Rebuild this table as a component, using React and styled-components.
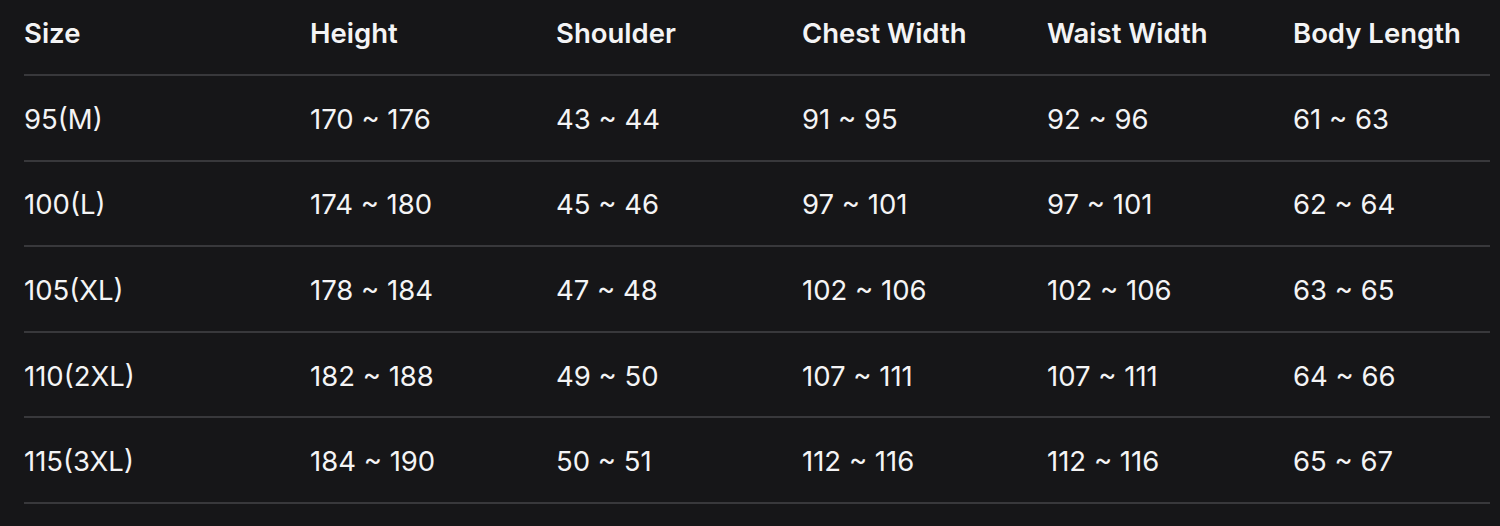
import React from 'react';
import styled, { createGlobalStyle } from 'styled-components';

const headers = ['Size', 'Height', 'Shoulder', 'Chest Width', 'Waist Width', 'Body Length'];

const rows = [
  ['95(M)', '170 ~ 176', '43 ~ 44', '91 ~ 95', '92 ~ 96', '61 ~ 63'],
  ['100(L)', '174 ~ 180', '45 ~ 46', '97 ~ 101', '97 ~ 101', '62 ~ 64'],
  ['105(XL)', '178 ~ 184', '47 ~ 48', '102 ~ 106', '102 ~ 106', '63 ~ 65'],
  ['110(2XL)', '182 ~ 188', '49 ~ 50', '107 ~ 111', '107 ~ 111', '64 ~ 66'],
  ['115(3XL)', '184 ~ 190', '50 ~ 51', '112 ~ 116', '112 ~ 116', '65 ~ 67'],
];

const GlobalStyle = createGlobalStyle`
  html, body {
    margin: 0;
    background: #161618;
  }
  body {
    font-family: Inter, 'Liberation Sans', sans-serif;
    color: #f4f4f5;
  }
`;

const Page = styled.div`
  width: 1500px;
  height: 526px;
  padding: 0 10px 0 24px;
  box-sizing: border-box;
  background: #161618;
`;

const Row = styled.div`
  display: grid;
  grid-template-columns: 286px 246px 246px 245px 246px 1fr;
  align-items: center;
  box-sizing: border-box;
  height: ${({ $head }) => ($head ? '76px' : '85.6px')};
  padding-top: ${({ $head }) => ($head ? '0' : '2px')};
  padding-bottom: ${({ $head }) => ($head ? '8px' : '0')};
  border-bottom: 2px solid #38383b;
`;

const Cell = styled.div`
  font-size: 27.5px;
  line-height: 34px;
  font-weight: ${({ $head }) => ($head ? 600 : 400)};
  color: #f4f4f5;
  white-space: nowrap;
`;

const App = () => (
  <Page>
    <GlobalStyle />
    <Row $head>
      {headers.map((h) => (
        <Cell key={h} $head>
          {h}
        </Cell>
      ))}
    </Row>
    {rows.map((r) => (
      <Row key={r[0]}>
        {r.map((c, i) => (
          <Cell key={i}>{c}</Cell>
        ))}
      </Row>
    ))}
  </Page>
);

export default App;
